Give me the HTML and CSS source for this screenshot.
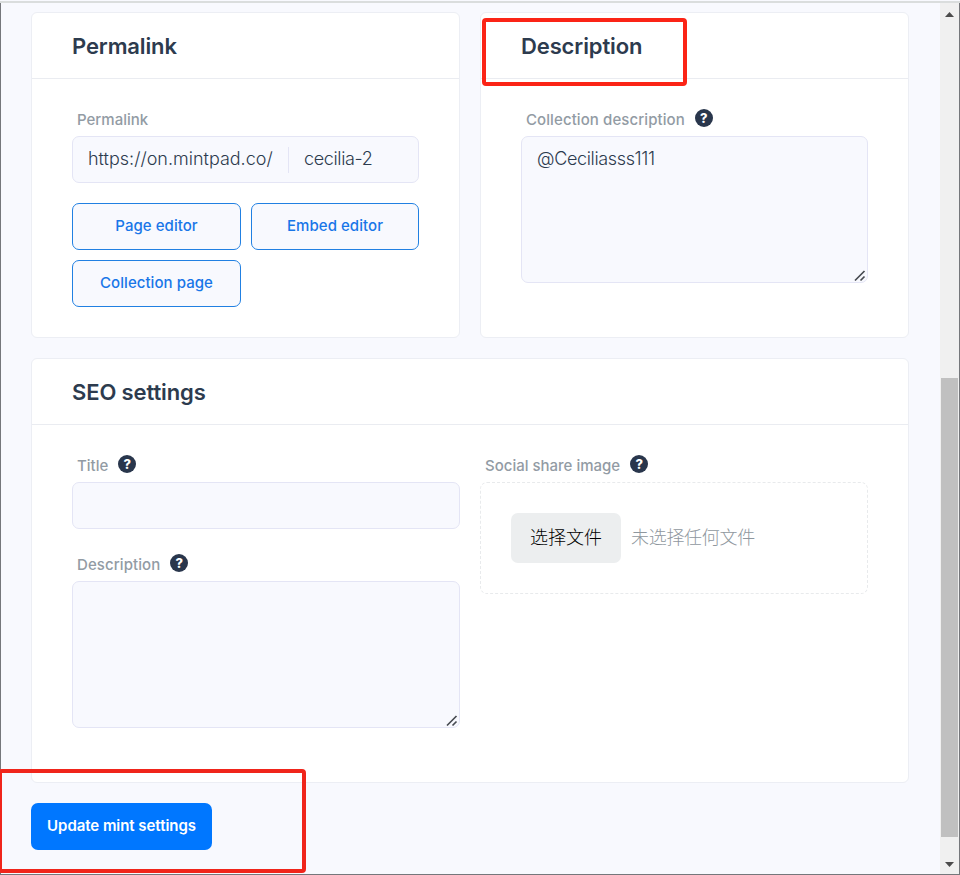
FILE: index.html
```html
<!DOCTYPE html>
<html lang="en">
<head>
<meta charset="utf-8">
<title>Mint settings</title>
<link rel="stylesheet" href="styles.css">
</head>
<body>
<svg class="defs" width="0" height="0" aria-hidden="true">
  <symbol id="grip" viewBox="0 0 12 12"><path d="M1 10.5L10.5 1M6.5 10.5L10.5 6.5" fill="none" stroke="#484c52" stroke-width="1.7"/></symbol>
</svg>
<div class="window">
  <main class="page">
    <div class="columns">
      <section class="card">
        <h2 class="card-title">Permalink</h2>
        <div class="card-body">
          <div class="label"><span>Permalink</span></div>
          <div class="input permalink"><span class="base">https://on.mintpad.co/</span><span class="slug">cecilia-2</span></div>
          <div class="buttons">
            <a class="outline">Page editor</a>
            <a class="outline">Embed editor</a>
            <a class="outline">Collection page</a>
          </div>
        </div>
      </section>
      <section class="card">
        <h2 class="card-title marked">Description</h2>
        <div class="card-body">
          <div class="label wide"><span>Collection description</span><i class="help">?</i></div>
          <div class="input area handle">@Ceciliasss111<svg class="grip"><use href="#grip"/></svg></div>
        </div>
      </section>
    </div>
    <section class="card seo">
      <h2 class="card-title">SEO settings</h2>
      <div class="card-body seo-grid">
        <div>
          <div class="label"><span>Title</span><i class="help">?</i></div>
          <div class="input"></div>
          <div class="label wide second"><span>Description</span><i class="help">?</i></div>
          <div class="input area"><svg class="grip"><use href="#grip"/></svg></div>
        </div>
        <div>
          <div class="label"><span>Social share image</span><i class="help">?</i></div>
          <div class="drop"><span class="choose">选择文件</span><span class="none">未选择任何文件</span></div>
        </div>
      </div>
    </section>
    <div class="actions"><button class="primary">Update mint settings</button></div>
  </main>
  <div class="scrollbar">
    <svg class="arrow" viewBox="0 0 9 5"><path d="M0 5L4.5 0L9 5Z" fill="#4c4c4c"/></svg>
    <div class="track"><div class="thumb"></div></div>
    <svg class="arrow" viewBox="0 0 9 5"><path d="M0 0L4.5 5L9 0Z" fill="#4c4c4c"/></svg>
  </div>
</div>
</body>
</html>
```
FILE: styles.css
```css
*, *::before, *::after { box-sizing: border-box; }
html { overflow: hidden; }
body { margin: 0; font-family: Inter, "Noto Sans CJK SC", sans-serif; color: #2d3b4e; }
.defs { position: absolute; }
.window {
  display: flex;
  height: 875px;
  background: #f8f9fe;
  border: 1px solid #75777b;
  border-top: 0;
}
.window::before { content: ""; position: absolute; top: 0; left: 0; width: 960px; height: 3px; background: #dadddd; border-top: 1px solid #f8f9fe; }
.page { flex: 1; padding: 12px 31px 0 30px; }
.columns { display: grid; grid-template-columns: 429px 429px; gap: 20px; }
.card { height: 326px; background: #fff; border: 1px solid #eceef4; border-radius: 6px; }
.card-title {
  height: 66px;
  margin: 0;
  padding: 0 40px;
  border-bottom: 1px solid #eaecf1;
  font-size: 22px;
  font-weight: 600;
  letter-spacing: -0.12px;
  line-height: 66px;
}
.marked { position: relative; }
.marked::after {
  content: "";
  position: absolute;
  left: 1px;
  top: 5px;
  width: 205px;
  height: 68px;
  border: 4px solid #fb2416;
  border-radius: 4px;
}
.card-body { padding: 30px 40px 0; }
.label { position: relative; top: -1px; display: flex; align-items: center; height: 20px; margin: 0 0 7px 5px; gap: 10px; font-size: 15px; font-weight: 500; color: #929ba4; }
.label span { padding-top: 2px; }
.wide { letter-spacing: 0.09px; }
.help { width: 18px; height: 18px; border-radius: 50%; background: #29364c; color: #fff; font: 800 13px/18px Inter, sans-serif; text-align: center; }
.input { position: relative; height: 47px; padding: 0 15px; background: #f8f9fe; border: 1px solid #e4e5f5; border-radius: 7px; font-size: 18px; font-weight: 300; line-height: 44px; }
.area { height: 147px; }
.handle { letter-spacing: -0.35px; }
.grip { position: absolute; right: 1px; bottom: 0; width: 12px; height: 12px; }
.permalink { display: flex; align-items: center; }
.base { width: 201px; height: 26px; line-height: 24px; border-right: 1px solid #e4e5f5; }
.slug { height: 26px; padding-left: 15px; letter-spacing: -0.35px; line-height: 24px; }
.buttons { display: grid; grid-template-columns: 169px 168px; gap: 10px; margin-top: 20px; }
.outline { height: 47px; border: 1px solid #2180e2; border-radius: 7px; background: #f8f9fe; color: #1876e8; font-size: 15px; font-weight: 500; letter-spacing: 0.05px; line-height: 44px; text-align: center; }
.seo { height: 425px; margin-top: 20px; }
.seo-grid { display: grid; grid-template-columns: 388px 388px; gap: 20px; }
.second { margin-top: 25px; }
.drop { display: flex; align-items: center; height: 112px; padding: 0 30px; border: 1px dashed #e8eaec; border-radius: 7px; font: 300 18px "Noto Sans CJK SC", sans-serif; }
.choose { width: 110px; height: 50px; border-radius: 7px; background: #eceeef; color: #000; line-height: 47px; text-align: center; }
.none { height: 50px; margin-left: 10px; color: #8f979e; letter-spacing: -0.3px; line-height: 47px; }
.actions { position: relative; padding-top: 20px; }
.actions::before {
  content: "";
  position: absolute;
  left: -33px;
  top: -14px;
  width: 308px;
  height: 104px;
  border: 4px solid #f0251b;
  border-radius: 4px;
}
.primary { position: relative; display: block; width: 181px; height: 47px; padding: 0 0 2px; border: 0; border-radius: 7px; background: #0077ff; color: #fff; font: 600 15px Inter, sans-serif; letter-spacing: -0.05px; white-space: nowrap; }
.scrollbar { display: flex; flex-direction: column; align-items: center; width: 19px; padding: 12px 0 7px; background: #f0f0f0; }
.arrow { width: 9px; height: 5px; }
.track { flex: 1; width: 17px; padding-top: 361px; }
.thumb { height: 459px; background: #c0c0c0; }
```
